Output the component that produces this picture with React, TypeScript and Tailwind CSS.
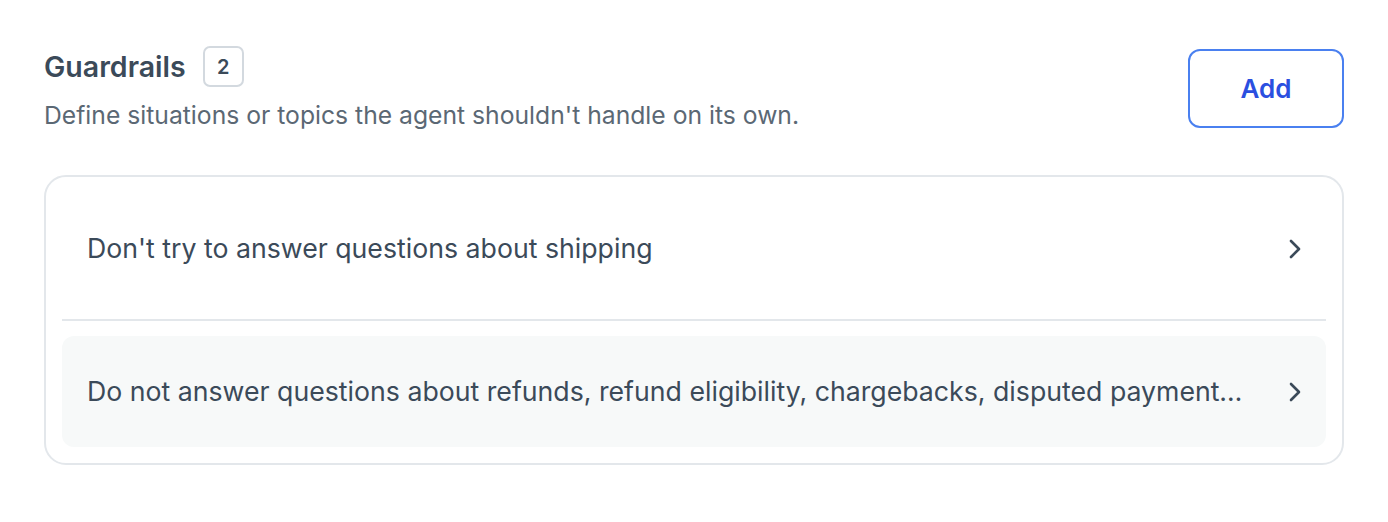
const guardrails = [
  { id: 1, text: "Don't try to answer questions about shipping" },
  {
    id: 2,
    text: "Do not answer questions about refunds, refund eligibility, chargebacks, disputed payments, or any billing adjustments on behalf of the team",
  },
]

const Chevron = () => (
  <svg width="14" height="22" viewBox="0 0 14 22" className="shrink-0 text-[#3b4a59]">
    <polyline
      points="3,3 11,11 3,19"
      fill="none"
      stroke="currentColor"
      strokeWidth="2.6"
      strokeLinecap="round"
      strokeLinejoin="round"
    />
  </svg>
)

export default function App() {
  return (
    <div className="min-h-screen bg-white px-[44px] pt-[46px] font-['Inter',sans-serif]">
      <div className="flex items-start justify-between">
        <div className="flex flex-col">
          <div className="flex items-center gap-[17px]">
            <h2 className="text-[28.5px] font-semibold leading-[41px] text-[#3b4a59]">
              Guardrails
            </h2>
            <span className="flex h-[41px] w-[41px] items-center justify-center rounded-[7px] border-2 border-[#d3d9df] text-[20px] font-semibold text-[#3b4a59]">
              2
            </span>
          </div>
          <p className="mt-[12px] text-[24.7px] leading-[32px] text-[#5b6874]">
            Define situations or topics the agent shouldn't handle on its own.
          </p>
        </div>
        <button className="mt-[3px] h-[79px] w-[156px] rounded-[12px] border-2 border-[#4a80f0] text-[26px] font-semibold text-[#2b4fe0]">
          Add
        </button>
      </div>

      <div className="mt-[44px] rounded-[22px] border-2 border-[#e3e7eb] p-[16px]">
        {guardrails.map((g, i) => (
          <div key={g.id}>
            {i > 0 && <div className="my-[15px] h-[2px] bg-[#e3e7eb]" />}
            <div
              className={`flex h-[111px] items-center justify-between gap-[44px] rounded-[12px] pl-[25px] pr-[24px] ${
                i === 1 ? "bg-[#f7f9f9]" : ""
              }`}
            >
              <p className="truncate text-[26.7px] text-[#3b4a59]">{g.text}</p>
              <Chevron />
            </div>
          </div>
        ))}
      </div>
    </div>
  )
}
